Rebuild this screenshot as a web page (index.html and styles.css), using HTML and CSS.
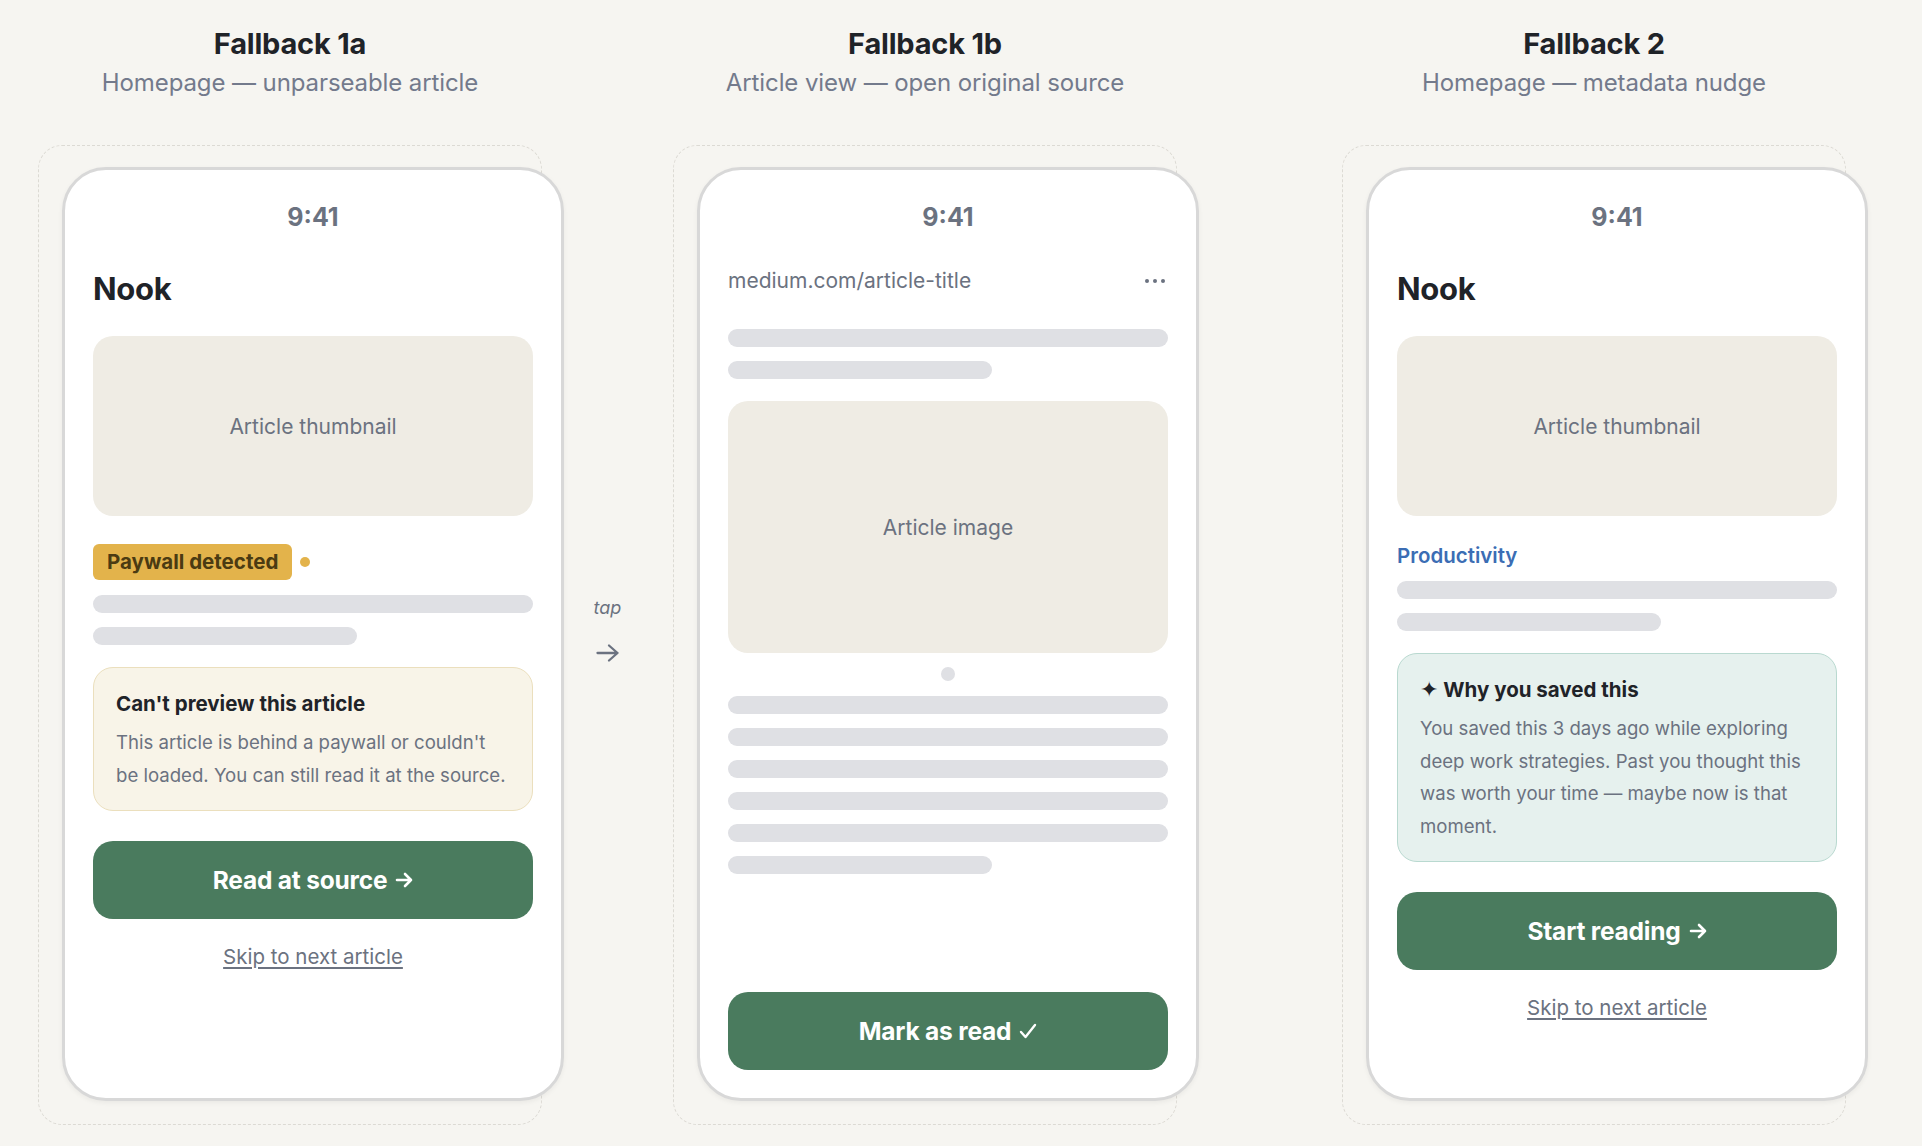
FILE: index.html
```html
<!DOCTYPE html>
<html lang="en">
<head>
  <meta charset="UTF-8" />
  <meta name="viewport" content="width=device-width, initial-scale=1.0"/>
  <title>Nook – Fallback states</title>
  <link rel="stylesheet" href="styles.css">
</head>
<body>
  <main class="board">

    <!-- Fallback 1a -->
    <section class="flow">
      <header class="flow-head">
        <h2>Fallback 1a</h2>
        <p>Homepage — unparseable article</p>
      </header>
      <div class="frame">
        <div class="phone">
          <div class="status">9:41</div>
          <h3 class="app-title">Nook</h3>
          <div class="thumb">Article thumbnail</div>
          <div class="meta-row">
            <span class="badge">Paywall detected</span>
            <span class="dot"></span>
          </div>
          <div class="lines after-badge">
            <div class="skel"></div>
            <div class="skel short"></div>
          </div>
          <div class="note warn">
            <h4>Can't preview this article</h4>
            <p>This article is behind a paywall or couldn't<br>be loaded. You can still read it at the source.</p>
          </div>
          <button class="cta">Read at source
            <svg class="arrow" width="18" height="16" viewBox="0 0 18 16" fill="none" stroke="currentColor" stroke-width="2.6" stroke-linecap="round" stroke-linejoin="round"><path d="M2 8H16M10 2L16 8L10 14"/></svg>
          </button>
          <a class="skip" href="#">Skip to next article</a>
        </div>
      </div>
    </section>

    <div class="connector">
      <span class="tap">tap</span>
      <svg width="26" height="20" viewBox="0 0 26 20" fill="none" stroke="currentColor" stroke-width="2.3" stroke-linecap="round" stroke-linejoin="round">
        <path d="M2.5 10H22.5M14 2.5L22.5 10L14 17.5"/>
      </svg>
    </div>

    <!-- Fallback 1b -->
    <section class="flow">
      <header class="flow-head">
        <h2>Fallback 1b</h2>
        <p>Article view — open original source</p>
      </header>
      <div class="frame">
        <div class="phone">
          <div class="status">9:41</div>
          <div class="url-bar">
            <span>medium.com/article-title</span>
            <span class="more"><i></i><i></i><i></i></span>
          </div>
          <div class="lines after-url">
            <div class="skel"></div>
            <div class="skel short"></div>
          </div>
          <div class="thumb tall">Article image</div>
          <span class="page-dot"></span>
          <div class="lines after-image">
            <div class="skel"></div>
            <div class="skel"></div>
            <div class="skel"></div>
            <div class="skel"></div>
            <div class="skel"></div>
            <div class="skel short"></div>
          </div>
          <button class="cta bottom">Mark as read
            <svg class="check" width="18" height="16" viewBox="0 0 18 16" fill="none" stroke="currentColor" stroke-width="2.4" stroke-linecap="round" stroke-linejoin="round"><path d="M2 9L6.5 14L16 2"/></svg>
          </button>
        </div>
      </div>
    </section>

    <!-- Fallback 2 -->
    <section class="flow last">
      <header class="flow-head">
        <h2>Fallback 2</h2>
        <p>Homepage — metadata nudge</p>
      </header>
      <div class="frame">
        <div class="phone">
          <div class="status">9:41</div>
          <h3 class="app-title">Nook</h3>
          <div class="thumb">Article thumbnail</div>
          <div class="category">Productivity</div>
          <div class="lines after-category">
            <div class="skel"></div>
            <div class="skel short"></div>
          </div>
          <div class="note info">
            <h4><span class="spark">✦</span> Why you saved this</h4>
            <p>You saved this 3 days ago while exploring<br>deep work strategies. Past you thought this<br>was worth your time — maybe now is that<br>moment.</p>
          </div>
          <button class="cta">Start reading
            <svg class="arrow" width="18" height="16" viewBox="0 0 18 16" fill="none" stroke="currentColor" stroke-width="2.6" stroke-linecap="round" stroke-linejoin="round"><path d="M2 8H16M10 2L16 8L10 14"/></svg>
          </button>
          <a class="skip" href="#">Skip to next article</a>
        </div>
      </div>
    </section>

  </main>
</body>
</html>
```

FILE: styles.css
```css
body {
  margin: 0;
  background: #f6f5f1;
  font-family: Inter, "Liberation Sans", sans-serif;
  color: #1f2328;
}
.board {
  display: flex;
  align-items: flex-start;
  padding: 26px 0 0 38px;
}
.flow {
  width: 504px;
}
.flow.last {
  margin-left: 165px;
}
.flow-head {
  text-align: center;
  margin-bottom: 46px;
}
.flow-head h2 {
  margin: 0;
  font-size: 29px;
  line-height: 36px;
  font-weight: 700;
  letter-spacing: -0.2px;
}
.flow-head p {
  margin: 5px 0 0;
  font-size: 24px;
  line-height: 32px;
  color: #737a8c;
  letter-spacing: -0.1px;
}
.frame {
  box-sizing: border-box;
  width: 504px;
  height: 980px;
  border: 1px dashed #dcdad4;
  border-radius: 24px;
  padding: 21px 0 0 23px;
}
.phone {
  box-sizing: border-box;
  width: 502px;
  height: 934px;
  background: #fff;
  border: 3px solid #d8d8d8;
  border-radius: 44px;
  padding: 0 28px 28px;
  display: flex;
  flex-direction: column;
  box-shadow: 0 2px 5px rgba(0, 0, 0, 0.05);
}
.status {
  padding-top: 30px;
  line-height: 34px;
  font-size: 25px;
  font-weight: 700;
  color: #6b7280;
  text-align: center;
}
.app-title {
  margin: 35px 0 0;
  font-size: 31px;
  line-height: 40px;
  font-weight: 700;
  letter-spacing: -0.3px;
}
.thumb {
  margin-top: 27px;
  height: 180px;
  border-radius: 20px;
  background: #efece4;
  display: flex;
  align-items: center;
  justify-content: center;
  color: #6b7280;
  font-size: 21px;
}
.thumb.tall {
  margin-top: 22px;
  height: 252px;
}
.meta-row {
  margin-top: 28px;
  display: flex;
  align-items: center;
  gap: 8px;
}
.badge {
  height: 36px;
  line-height: 36px;
  padding: 0 14px;
  border-radius: 6px;
  background: #e3b34b;
  color: #4b3b12;
  font-size: 20.5px;
  font-weight: 700;
}
.dot {
  width: 10px;
  height: 10px;
  border-radius: 50%;
  background: #e3b34b;
}
.category {
  margin-top: 26px;
  font-size: 20.5px;
  line-height: 28px;
  font-weight: 600;
  color: #3b6db4;
}
.lines {
  display: flex;
  flex-direction: column;
  gap: 14px;
}
.lines.after-badge { margin-top: 15px; }
.lines.after-category { margin-top: 11px; }
.lines.after-url { margin-top: 34px; }
.lines.after-image { margin-top: 15px; }
.skel {
  height: 18px;
  border-radius: 9px;
  background: #dfe0e4;
}
.skel.short {
  width: 264px;
}
.url-bar {
  margin-top: 33px;
  display: flex;
  justify-content: space-between;
  align-items: center;
  font-size: 21px;
  line-height: 28px;
  color: #6b7280;
}
.more {
  display: flex;
  gap: 4px;
  margin-right: 3px;
}
.more i {
  width: 4px;
  height: 4px;
  border-radius: 50%;
  background: #6b7280;
}
.page-dot {
  align-self: center;
  width: 14px;
  height: 14px;
  margin-top: 14px;
  border-radius: 50%;
  background: #dfe0e4;
}
.note {
  margin-top: 22px;
  padding: 22px 22px 19px;
  border: 1px solid;
  border-radius: 20px;
}
.note.warn {
  background: #f8f4e8;
  border-color: #ebdfbd;
}
.note.info {
  background: #e6f1ee;
  border-color: #b9d9d0;
}
.note h4 {
  margin: 0;
  font-size: 20.5px;
  line-height: 28px;
  font-weight: 700;
}
.note .spark {
  font-family: "DejaVu Sans", sans-serif;
  font-size: 22px;
}
.note p {
  margin: 8px 0 0;
  font-size: 18.6px;
  line-height: 32.5px;
  color: #6b7280;
}
.cta {
  margin-top: 30px;
  height: 78px;
  border: 0;
  border-radius: 20px;
  background: #4a7b5e;
  color: #fff;
  font-family: inherit;
  font-size: 24.5px;
  font-weight: 700;
  display: flex;
  align-items: center;
  justify-content: center;
  gap: 8px;
  letter-spacing: -0.2px;
}
.cta.bottom {
  margin-top: auto;
}
.skip {
  margin-top: 24px;
  align-self: center;
  font-size: 20.5px;
  line-height: 28px;
  color: #6b7280;
  text-decoration: underline;
  text-underline-offset: 3px;
}
.connector {
  width: 131px;
  padding-top: 570px;
  display: flex;
  flex-direction: column;
  align-items: center;
  color: #6b7280;
}
.connector .tap {
  font-style: italic;
  font-size: 18px;
  line-height: 24px;
}
.connector svg {
  margin-top: 23px;
}
```
